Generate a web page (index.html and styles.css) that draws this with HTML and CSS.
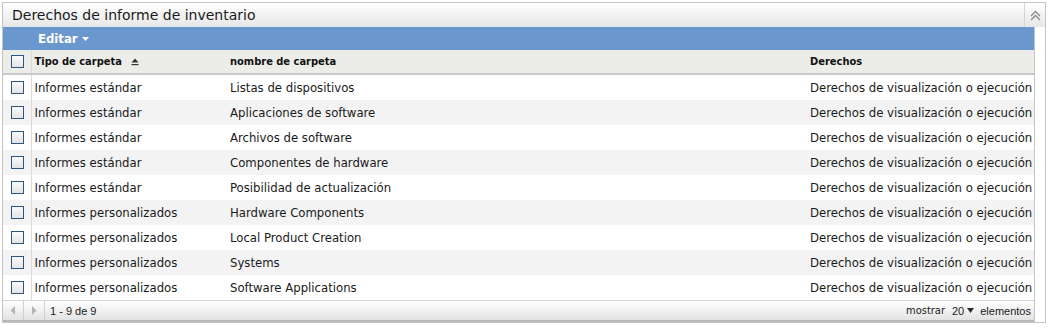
FILE: index.html
```html
<!DOCTYPE html>
<html lang="es">
<head>
<meta charset="utf-8">
<title>Derechos de informe de inventario</title>
<link rel="stylesheet" href="styles.css">
</head>
<body>
<div class="panel">
  <div class="titlebar">
    <span class="title">Derechos de informe de inventario</span>
    <span class="collapse">
      <svg width="11" height="11" viewBox="0 0 11 11"><path d="M1 6 L5.5 1.5 L10 6 M1 10 L5.5 5.5 L10 10" fill="none" stroke="#8a8a8a" stroke-width="1.3"/></svg>
    </span>
  </div>
  <div class="content">
    <div class="grid">
      <div class="toolbar">
        <span class="menu">Editar <svg width="7" height="4" viewBox="0 0 7 4"><path d="M0 0 H7 L3.5 4 Z" fill="#ffffff"/></svg></span>
      </div>
      <table class="tbl">
        <colgroup><col class="c1"><col class="c2"><col class="c3"><col class="c4"></colgroup>
        <thead>
          <tr>
            <th class="chk"><span class="box"></span></th>
            <th>Tipo de carpeta <svg class="sort" width="8" height="8" viewBox="0 0 8 8"><path d="M0.5 4.5 L4 0.5 L7.5 4.5 Z" fill="#333"/><rect x="0.5" y="6" width="7" height="1.2" fill="#333"/></svg></th>
            <th>nombre de carpeta</th>
            <th>Derechos</th>
          </tr>
        </thead>
        <tbody>
          <tr><td class="chk"><span class="box"></span></td><td>Informes estándar</td><td>Listas de dispositivos</td><td>Derechos de visualización o ejecución</td></tr>
          <tr><td class="chk"><span class="box"></span></td><td>Informes estándar</td><td>Aplicaciones de software</td><td>Derechos de visualización o ejecución</td></tr>
          <tr><td class="chk"><span class="box"></span></td><td>Informes estándar</td><td>Archivos de software</td><td>Derechos de visualización o ejecución</td></tr>
          <tr><td class="chk"><span class="box"></span></td><td>Informes estándar</td><td>Componentes de hardware</td><td>Derechos de visualización o ejecución</td></tr>
          <tr><td class="chk"><span class="box"></span></td><td>Informes estándar</td><td>Posibilidad de actualización</td><td>Derechos de visualización o ejecución</td></tr>
          <tr><td class="chk"><span class="box"></span></td><td>Informes personalizados</td><td>Hardware Components</td><td>Derechos de visualización o ejecución</td></tr>
          <tr><td class="chk"><span class="box"></span></td><td>Informes personalizados</td><td>Local Product Creation</td><td>Derechos de visualización o ejecución</td></tr>
          <tr><td class="chk"><span class="box"></span></td><td>Informes personalizados</td><td>Systems</td><td>Derechos de visualización o ejecución</td></tr>
          <tr><td class="chk"><span class="box"></span></td><td>Informes personalizados</td><td>Software Applications</td><td>Derechos de visualización o ejecución</td></tr>
        </tbody>
      </table>
      <div class="footer">
        <span class="pager">
          <svg width="6" height="9" viewBox="0 0 6 9"><path d="M5 0 V9 L0.5 4.5 Z" fill="#b4b4b4"/></svg>
        </span>
        <span class="pager">
          <svg width="6" height="9" viewBox="0 0 6 9"><path d="M1 0 V9 L5.5 4.5 Z" fill="#b4b4b4"/></svg>
        </span>
        <span class="range">1 - 9 de 9</span>
        <span class="spacer"></span>
        <span class="show">mostrar</span>
        <span class="count">20 <svg width="7" height="5" viewBox="0 0 7 5"><path d="M0 0 H7 L3.5 5 Z" fill="#2b2b2b"/></svg></span>
        <span class="items">elementos</span>
      </div>
    </div>
  </div>
</div>
</body>
</html>
```
FILE: styles.css
```css
html, body {
  margin: 0;
  padding: 0;
  background: #ffffff;
}
body {
  font-family: "DejaVu Sans Condensed", "DejaVu Sans", sans-serif;
  color: #111111;
}
.panel {
  margin: 2px 0 0 2px;
  width: 1042px;
  border: 1px solid #c4c4c4;
  background: #ffffff;
}
.titlebar {
  height: 24px;
  display: flex;
  align-items: center;
  background: linear-gradient(#ffffff, #e6e6e6);
}
.title {
  flex: 1;
  padding-left: 9px;
  padding-bottom: 1px;
  font-family: "DejaVu Sans", sans-serif;
  font-size: 14px;
  color: #1a1a1a;
}
.collapse {
  width: 20px;
  height: 24px;
  border-left: 1px solid #d4d4d4;
  display: flex;
  align-items: center;
  justify-content: center;
}
.content {
  padding-right: 10px;
}
.grid {
  width: 1031px;
  border-right: 1px solid #c4c4c4;
}
.toolbar {
  height: 23px;
  background: #6b97cf;
  display: flex;
  align-items: center;
  padding-left: 35px;
}
.menu {
  color: #ffffff;
  font-weight: bold;
  font-size: 13px;
  display: flex;
  align-items: center;
  gap: 4px;
}
.tbl {
  width: 1031px;
  border-collapse: collapse;
  table-layout: fixed;
}
.c1 { width: 28px; }
.c2 { width: 196px; }
.c3 { width: 580px; }
.c4 { width: 227px; }
.tbl th, .tbl td {
  padding: 0 0 0 3px;
  text-align: left;
  white-space: nowrap;
  overflow: hidden;
}
.tbl th {
  height: 23px;
  background: #ecece9;
  border-bottom: 2px solid #c9c9c9;
  font-size: 11px;
  font-weight: bold;
  color: #111111;
}
.tbl td {
  height: 25px;
  font-size: 13px;
  color: #1a1a1a;
}
.tbl tbody tr:nth-child(even) td {
  background: #f3f3f3;
}
.tbl .chk {
  padding: 0 0 0 8px;
  border-right: 1px solid #dadada;
}
.box {
  display: block;
  width: 11px;
  height: 11px;
  border: 1px solid #2f547f;
  background: linear-gradient(#fafafa, #e4e4e4);
}
.sort {
  margin-left: 6px;
  vertical-align: -1px;
}
.footer {
  height: 19px;
  border-top: 1px solid #d6d6d6;
  border-bottom: 2px solid #b8b8b8;
  background: linear-gradient(#ffffff, #e2e2e2);
  display: flex;
  align-items: center;
  font-family: "Liberation Sans", Arial, sans-serif;
  font-size: 11px;
  color: #1a1a1a;
}
.pager {
  width: 20px;
  height: 19px;
  border-right: 1px solid #cfcfcf;
  display: flex;
  align-items: center;
  justify-content: center;
}
.range {
  padding-left: 5px;
}
.spacer {
  flex: 1;
}
.show {
  font-family: "DejaVu Sans Condensed", "DejaVu Sans", sans-serif;
  font-size: 11px;
  margin-right: 7px;
}
.count {
  display: flex;
  align-items: center;
  gap: 3px;
  margin-right: 6px;
}
.items {
  padding-right: 3px;
}
```
